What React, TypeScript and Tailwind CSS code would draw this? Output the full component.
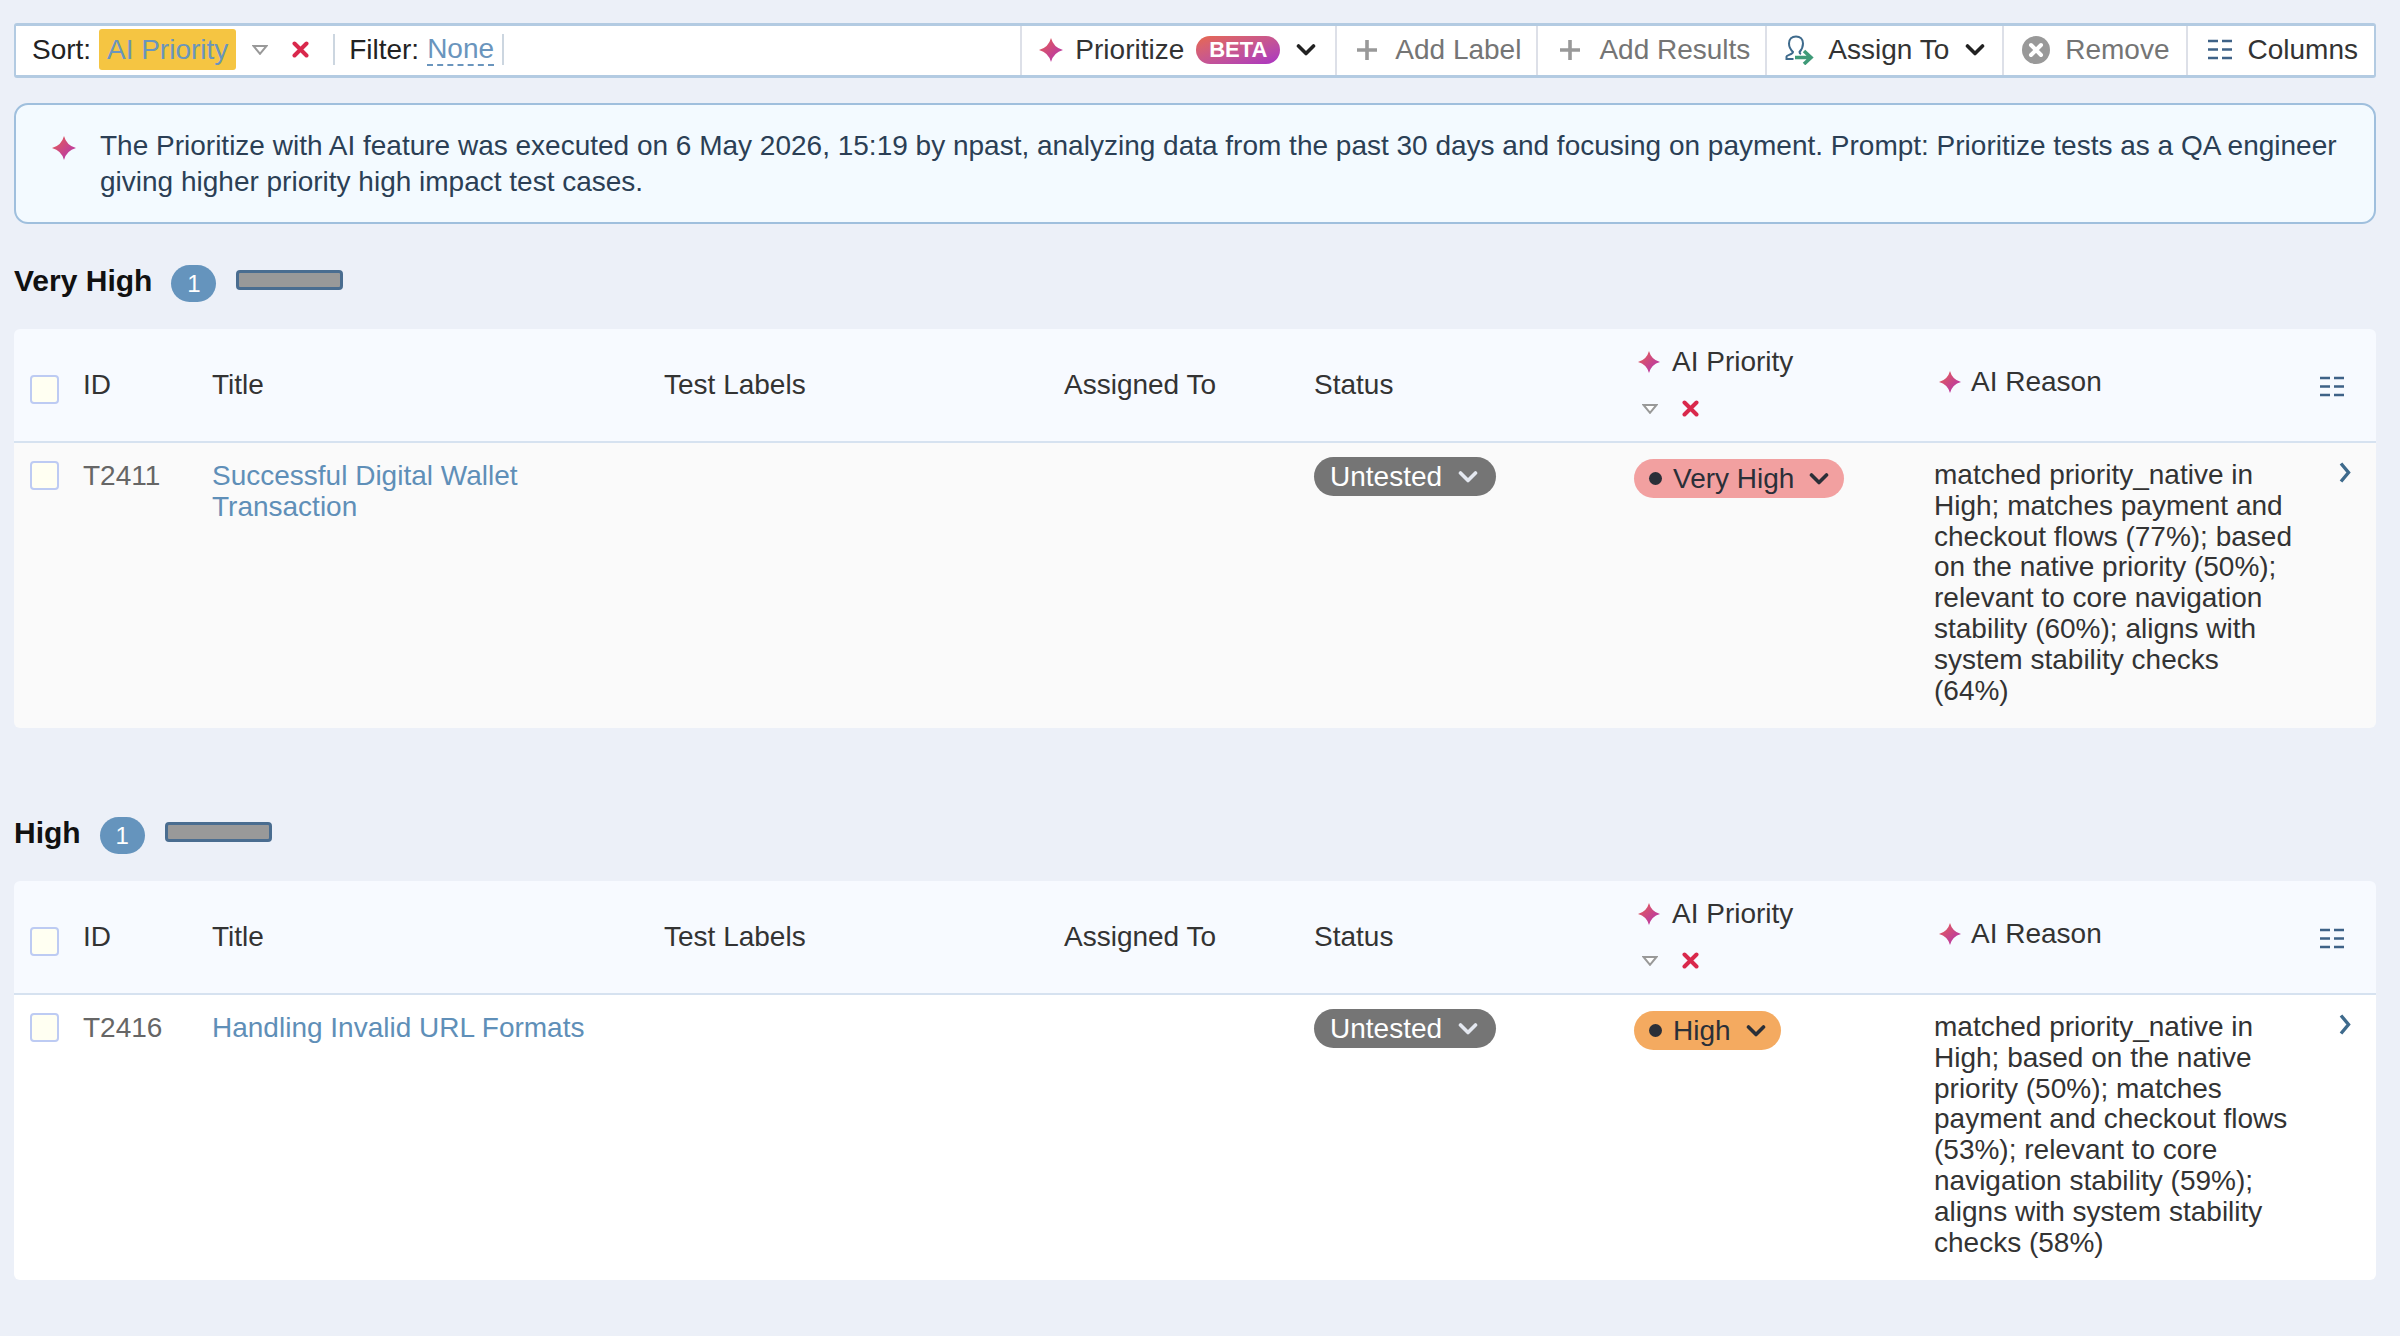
import { useId } from "react";

function Sparkle({ className = "" }: { className?: string }) {
  const id = useId();
  return (
    <svg viewBox="0 0 24 24" className={`h-6 w-6 shrink-0 ${className}`}>
      <defs>
        <linearGradient id={id} x1="0" y1="0" x2="1" y2="1">
          <stop offset="0" stopColor="#e8604f" />
          <stop offset="1" stopColor="#b030b8" />
        </linearGradient>
      </defs>
      <path d="M12 0Q14.5 9.5 24 12Q14.5 14.5 12 24Q9.5 14.5 0 12Q9.5 9.5 12 0Z" fill={`url(#${id})`} />
    </svg>
  );
}

function Chevron({ className = "" }: { className?: string }) {
  return (
    <svg viewBox="0 0 20 14" className={`h-[14px] w-5 shrink-0 ${className}`}>
      <path d="M2.5 3L10 10.5L17.5 3" fill="none" stroke="currentColor" strokeWidth="3.6" strokeLinecap="round" strokeLinejoin="round" />
    </svg>
  );
}

function SortTriangle() {
  return (
    <svg viewBox="0 0 16 10" className="h-[10px] w-4 shrink-0">
      <path d="M1.5 1H14.5L8 8.8Z" fill="#fff" stroke="#999" strokeWidth="2" />
    </svg>
  );
}

function RedX() {
  return (
    <svg viewBox="0 0 17 17" className="h-[17px] w-[17px] shrink-0">
      <path d="M2.5 2.5L14.5 14.5M14.5 2.5L2.5 14.5" stroke="#d9284c" strokeWidth="4" strokeLinecap="round" />
    </svg>
  );
}

function Plus() {
  return (
    <svg viewBox="0 0 22 22" className="h-[22px] w-[22px] shrink-0">
      <path d="M11 1V21M1 11H21" stroke="#999" strokeWidth="3.6" />
    </svg>
  );
}

function ColumnsIcon() {
  return (
    <svg viewBox="0 0 24 21" className="h-[21px] w-6 shrink-0">
      <path d="M0 2H10M14 2H24M0 10.5H10M14 10.5H24M0 19H10M14 19H24" stroke="#3e6287" strokeWidth="2.4" />
    </svg>
  );
}

function AssignIcon() {
  return (
    <svg viewBox="0 0 30 30" className="h-[30px] w-[30px] shrink-0">
      <path
        d="M8.5 24H1.5V21.5C1.5 20 8 19.5 8 17C5.5 14.5 4 11.5 4 8.5C4 4 7 1.5 11 1.5C15 1.5 18 4 18 8.5C18 11.5 16.8 14.5 14.5 17C14.5 18 15 18.5 16 19"
        fill="none"
        stroke="#3e6a8c"
        strokeWidth="2"
      />
      <path d="M10 22.5H25M19 16L26 22.5L19 29" fill="none" stroke="#3f9a78" strokeWidth="3.6" />
    </svg>
  );
}

function RemoveIcon() {
  return (
    <svg viewBox="0 0 28 28" className="h-7 w-7 shrink-0">
      <circle cx="14" cy="14" r="14" fill="#999" />
      <path d="M9 9L19 19M19 9L9 19" stroke="#fff" strokeWidth="4" strokeLinecap="round" />
    </svg>
  );
}

function RowChevron() {
  return (
    <svg viewBox="0 0 14 21" className="h-[21px] w-[14px]">
      <path d="M3 1.5L10.5 10.5L3 19.5" fill="none" stroke="#3e6a8c" strokeWidth="3.4" />
    </svg>
  );
}

function Checkbox() {
  return <div className="h-[29px] w-[29px] rounded-[4px] border-2 border-[#bdcbf3] bg-[#fffff2]" />;
}

const columns = "grid grid-cols-[69px_129px_452px_400px_250px_320px_300px_362px_80px]";

type Section = {
  title: string;
  id: string;
  name: string;
  priority: string;
  pillClass: string;
  reason: string;
  rowClass: string;
};

const sections: Section[] = [
  {
    title: "Very High",
    id: "T2411",
    name: "Successful Digital Wallet Transaction",
    priority: "Very High",
    pillClass: "bg-[#f2a0a0]",
    reason:
      "matched priority_native in High; matches payment and checkout flows (77%); based on the native priority (50%); relevant to core navigation stability (60%); aligns with system stability checks (64%)",
    rowClass: "bg-[#fafafa]",
  },
  {
    title: "High",
    id: "T2416",
    name: "Handling Invalid URL Formats",
    priority: "High",
    pillClass: "bg-[#f4aa60]",
    reason:
      "matched priority_native in High; based on the native priority (50%); matches payment and checkout flows (53%); relevant to core navigation stability (59%); aligns with system stability checks (58%)",
    rowClass: "bg-white",
  },
];

function Toolbar() {
  return (
    <div className="ml-[14px] mr-6 flex h-[55px] items-stretch rounded-[3px] border-y-[3px] border-x-2 border-[#b3cbe2] bg-white">
      <div className="flex flex-1 items-center pb-[2px] pl-4">
        <span className="text-[#222]">Sort:</span>
        <span className="ml-2 flex h-[41px] w-[137px] items-center justify-center rounded-[3px] bg-[#f5c542] text-[#6a95bd]">AI Priority</span>
        <span className="ml-4"><SortTriangle /></span>
        <span className="ml-6"><RedX /></span>
        <span className="ml-6 h-[31px] w-[2px] bg-[#ccd6e0]" />
        <span className="ml-[14px] text-[#222]">Filter:</span>
        <span className="ml-2 border-b-2 border-dashed border-[#6a95bd] leading-[30px] text-[#6a95bd]">None</span>
        <span className="ml-2 h-[31px] w-[2px] bg-[#ccd6e0]" />
      </div>
      <div className="flex items-center border-l-2 border-[#dde0e8] pb-[2px] pl-[17px] pr-[19px] text-[#333]">
        <Sparkle />
        <span className="ml-3">Prioritize</span>
        <span className="ml-3 flex h-7 w-[84px] items-center justify-center rounded-full bg-gradient-to-br from-[#e8684a] to-[#aa30c4] text-[22px] font-bold text-white">BETA</span>
        <Chevron className="ml-4 text-[#222]" />
      </div>
      <div className="flex items-center gap-[17px] border-l-2 border-[#dde0e8] pb-[2px] pl-[19px] pr-[15px] text-[#757575]">
        <Plus />
        <span>Add Label</span>
      </div>
      <div className="flex items-center gap-[18px] border-l-2 border-[#dde0e8] pb-[2px] pl-[21px] pr-[15px] text-[#757575]">
        <Plus />
        <span>Add Results</span>
      </div>
      <div className="flex items-center border-l-2 border-[#dde0e8] pb-[2px] pl-[18px] pr-[17px] text-[#333]">
        <AssignIcon />
        <span className="ml-[13px]">Assign To</span>
        <Chevron className="ml-4 text-[#222]" />
      </div>
      <div className="flex items-center gap-[15px] border-l-2 border-[#dde0e8] pb-[2px] pl-[18px] pr-[16px] text-[#757575]">
        <RemoveIcon />
        <span>Remove</span>
      </div>
      <div className="flex items-center gap-4 border-l-2 border-[#dde0e8] pb-[2px] pl-5 pr-[16px] text-[#333]">
        <ColumnsIcon />
        <span>Columns</span>
      </div>
    </div>
  );
}

function Banner() {
  return (
    <div className="ml-[14px] mr-6 mt-[25px] flex h-[121px] items-center rounded-[14px] border-2 border-[#9fbfdd] bg-[#f3faff] pl-9 pr-6 text-[#2b3f55]">
      <Sparkle className="mr-6 mt-[31px] self-start" />
      <p className="leading-[35.5px]">
        The Prioritize with AI feature was executed on 6 May 2026, 15:19 by npast, analyzing data from the past 30 days and focusing on payment. Prompt: Prioritize tests as a QA engineer giving higher priority high impact test cases.
      </p>
    </div>
  );
}

function GroupTable({ section }: { section: Section }) {
  return (
    <section className="ml-[14px] mr-6">
      <div className="flex h-[37px] items-center">
        <h2 className="-translate-y-[3px] text-[30px] font-bold leading-none text-[#111]">{section.title}</h2>
        <span className="ml-[19px] flex h-[37px] w-[45px] items-center justify-center rounded-full bg-[#6594bd] text-[24px] text-white">1</span>
        <span className="ml-5 -translate-y-[4px] h-[20px] w-[107px] rounded-[4px] border-[3px] border-[#4a6d90] bg-[#999]" />
      </div>

      <div className="mt-[27px] overflow-hidden rounded-[6px] text-[#333]">
        <div className={`${columns} h-[114px] items-center border-b-2 border-[#d6e2f0] bg-[#f7faff]`}>
          <div className="pl-4 pt-[8px]"><Checkbox /></div>
          <div>ID</div>
          <div>Title</div>
          <div>Test Labels</div>
          <div>Assigned To</div>
          <div>Status</div>
          <div className="flex flex-col pb-[7px]">
            <div className="ml-1 flex items-center gap-3 leading-[31px]">
              <Sparkle className="!h-[22px] !w-[22px]" />
              <span>AI Priority</span>
            </div>
            <div className="ml-2 mt-[23px] flex items-center gap-6">
              <SortTriangle />
              <RedX />
            </div>
          </div>
          <div className="ml-[5px] flex items-center gap-[10px] pb-[6px]">
            <Sparkle className="!h-[22px] !w-[22px]" />
            <span>AI Reason</span>
          </div>
          <div className="pl-6 pt-[3px]"><ColumnsIcon /></div>
        </div>

        <div className={`${columns} h-[285px] items-start ${section.rowClass}`}>
          <div className="pl-4 pt-[18px]"><Checkbox /></div>
          <div className="pt-[17px] leading-[31px] text-[#666]">{section.id}</div>
          <div className="pt-[17px] leading-[31px] text-[#5f8fb8]">
            <p className="w-[400px]">{section.name}</p>
          </div>
          <div />
          <div />
          <div className="pt-[14px]">
            <span className="flex h-[39px] w-[182px] items-center justify-between rounded-full bg-[#757575] pl-4 pr-[18px] text-white">
              Untested
              <Chevron className="text-[#e4e8f0]" />
            </span>
          </div>
          <div className="pt-4">
            <span className={`inline-flex h-[39px] items-center rounded-full pl-[15px] pr-[15px] text-[#2a2f38] ${section.pillClass}`}>
              <span className="h-[13px] w-[13px] rounded-full bg-[#2a2f38]" />
              <span className="ml-[11px]">{section.priority}</span>
              <Chevron className="ml-[15px]" />
            </span>
          </div>
          <p className="pt-[17px] leading-[30.8px]">{section.reason}</p>
          <div className="pl-[42px] pt-[19px]"><RowChevron /></div>
        </div>
      </div>
    </section>
  );
}

export default function App() {
  return (
    <div className="h-[1336px] overflow-hidden bg-[#ecf0f8] pt-[23px] font-['Liberation_Sans',Arial,sans-serif] text-[28px] leading-[34px]">
      <Toolbar />
      <Banner />
      <div className="mt-[41px] flex flex-col gap-[89px]">
        {sections.map((section) => (
          <GroupTable key={section.id} section={section} />
        ))}
      </div>
    </div>
  );
}
